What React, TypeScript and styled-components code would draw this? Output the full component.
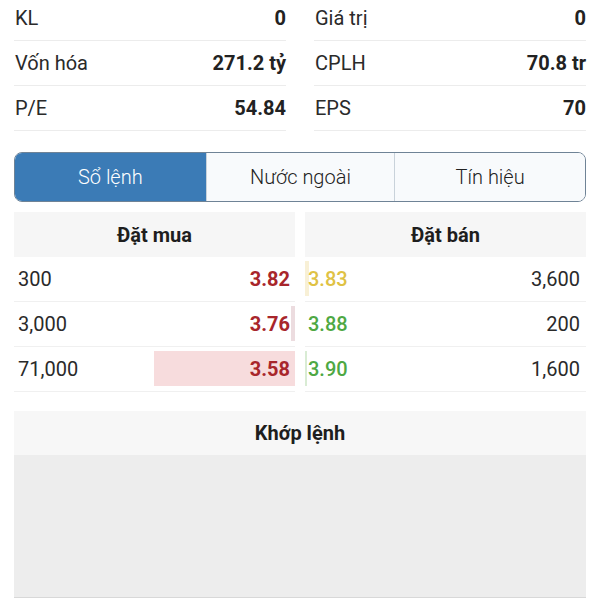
import React from "react";
import styled, { createGlobalStyle } from "styled-components";

const GlobalStyle = createGlobalStyle`
  html, body {
    margin: 0;
    padding: 0;
    background: #ffffff;
    font-family: Roboto, "Liberation Sans", sans-serif;
    color: #222222;
  }
`;

const Page = styled.div`
  width: 600px;
  height: 600px;
  overflow: hidden;
  padding: 0 14px;
  box-sizing: border-box;
`;

const StatsGrid = styled.div`
  display: grid;
  grid-template-columns: 1fr 1fr;
  column-gap: 28px;
  margin-top: -4px;
`;

const StatRow = styled.div`
  display: flex;
  justify-content: space-between;
  align-items: center;
  height: 44px;
  border-bottom: 1px solid #ececec;
  padding: 0 0 0 1px;
`;

const StatLabel = styled.span`
  font-size: 20px;
  color: #2a2a2a;
`;

const StatValue = styled.span`
  font-size: 20px;
  font-weight: 700;
  color: #222222;
`;

const Tabs = styled.div`
  display: flex;
  margin-top: 21px;
  height: 50px;
  border: 1px solid #6f8396;
  border-radius: 8px;
  overflow: hidden;
  box-sizing: border-box;
`;

const Tab = styled.div<{ $active?: boolean; $width: number }>`
  width: ${(p) => p.$width}px;
  display: flex;
  align-items: center;
  justify-content: center;
  font-size: 20px;
  font-weight: 300;
  background: ${(p) => (p.$active ? "#3b7bb6" : "#f8fafc")};
  color: ${(p) => (p.$active ? "#ffffff" : "#222222")};
  & + & {
    border-left: 1px solid #c9d2da;
  }
`;

const Book = styled.div`
  display: grid;
  grid-template-columns: 281px 281px;
  column-gap: 10px;
  margin-top: 10px;
`;

const Side = styled.div`
  display: flex;
  flex-direction: column;
`;

const SideHeader = styled.div`
  height: 45px;
  display: flex;
  align-items: center;
  justify-content: center;
  background: #f6f6f6;
  font-size: 20px;
  font-weight: 700;
  color: #1e1e1e;
`;

const BookRow = styled.div`
  position: relative;
  height: 44px;
  border-bottom: 1px solid #f0f0f0;
  display: flex;
  align-items: center;
  justify-content: space-between;
  font-size: 20px;
`;

const Volume = styled.span<{ $align: "left" | "right" }>`
  position: relative;
  ${(p) => (p.$align === "left" ? "padding-left: 4px;" : "padding-right: 6px;")}
  color: #2a2a2a;
`;

const Price = styled.span<{ $color: string; $side: "buy" | "sell" }>`
  position: relative;
  font-weight: ${(p) => (p.$side === "buy" ? 700 : 500)};
  color: ${(p) => p.$color};
  ${(p) => (p.$side === "buy" ? "padding-right: 5px;" : "padding-left: 3px;")}
`;

const Bar = styled.div<{ $side: "buy" | "sell"; $color: string }>`
  position: absolute;
  top: 4px;
  bottom: 5px;
  ${(p) => (p.$side === "buy" ? "right: 0;" : "left: 0;")}
  background: ${(p) => p.$color};
`;

const Match = styled.div`
  margin-top: 19px;
  display: flex;
  flex-direction: column;
`;

const MatchHeader = styled.div`
  height: 44px;
  display: flex;
  align-items: center;
  justify-content: center;
  background: #f7f7f7;
  font-size: 20px;
  font-weight: 700;
  color: #1e1e1e;
`;

const MatchBody = styled.div`
  height: 142px;
  background: #ededed;
  border-bottom: 1px solid #d8d8d8;
`;

const stats = [
  ["KL", "0", "Giá trị", "0"],
  ["Vốn hóa", "271.2 tỷ", "CPLH", "70.8 tr"],
  ["P/E", "54.84", "EPS", "70"],
];

const RED = "#a8262b";
const YELLOW = "#dfc244";
const GREEN = "#4ea843";

const bids = [
  { vol: "300", price: "3.82", bar: 0, barColor: "#f7dede" },
  { vol: "3,000", price: "3.76", bar: 4, barColor: "#ecdcdf" },
  { vol: "71,000", price: "3.58", bar: 141, barColor: "#f7dcdd" },
];

const asks = [
  { vol: "3,600", price: "3.83", color: YELLOW, bar: 4, barColor: "#f8f0d6" },
  { vol: "200", price: "3.88", color: GREEN, bar: 0, barColor: "#e3f1df" },
  { vol: "1,600", price: "3.90", color: GREEN, bar: 2, barColor: "#d9ecd4" },
];

const App = (): JSX.Element => {
  return (
    <Page>
      <GlobalStyle />
      <StatsGrid>
        {stats.map(([l1, v1, l2, v2]) => (
          <React.Fragment key={l1}>
            <StatRow>
              <StatLabel>{l1}</StatLabel>
              <StatValue>{v1}</StatValue>
            </StatRow>
            <StatRow>
              <StatLabel>{l2}</StatLabel>
              <StatValue>{v2}</StatValue>
            </StatRow>
          </React.Fragment>
        ))}
      </StatsGrid>

      <Tabs>
        <Tab $active $width={192}>Sổ lệnh</Tab>
        <Tab $width={189}>Nước ngoài</Tab>
        <Tab $width={191}>Tín hiệu</Tab>
      </Tabs>

      <Book>
        <Side>
          <SideHeader>Đặt mua</SideHeader>
          {bids.map((b) => (
            <BookRow key={b.price}>
              {b.bar > 0 && (
                <Bar $side="buy" $color={b.barColor} style={{ width: b.bar }} />
              )}
              <Volume $align="left">{b.vol}</Volume>
              <Price $side="buy" $color={RED}>
                {b.price}
              </Price>
            </BookRow>
          ))}
        </Side>
        <Side>
          <SideHeader>Đặt bán</SideHeader>
          {asks.map((a) => (
            <BookRow key={a.price}>
              {a.bar > 0 && (
                <Bar $side="sell" $color={a.barColor} style={{ width: a.bar }} />
              )}
              <Price $side="sell" $color={a.color}>
                {a.price}
              </Price>
              <Volume $align="right">{a.vol}</Volume>
            </BookRow>
          ))}
        </Side>
      </Book>

      <Match>
        <MatchHeader>Khớp lệnh</MatchHeader>
        <MatchBody />
      </Match>
    </Page>
  );
};

export default App;
